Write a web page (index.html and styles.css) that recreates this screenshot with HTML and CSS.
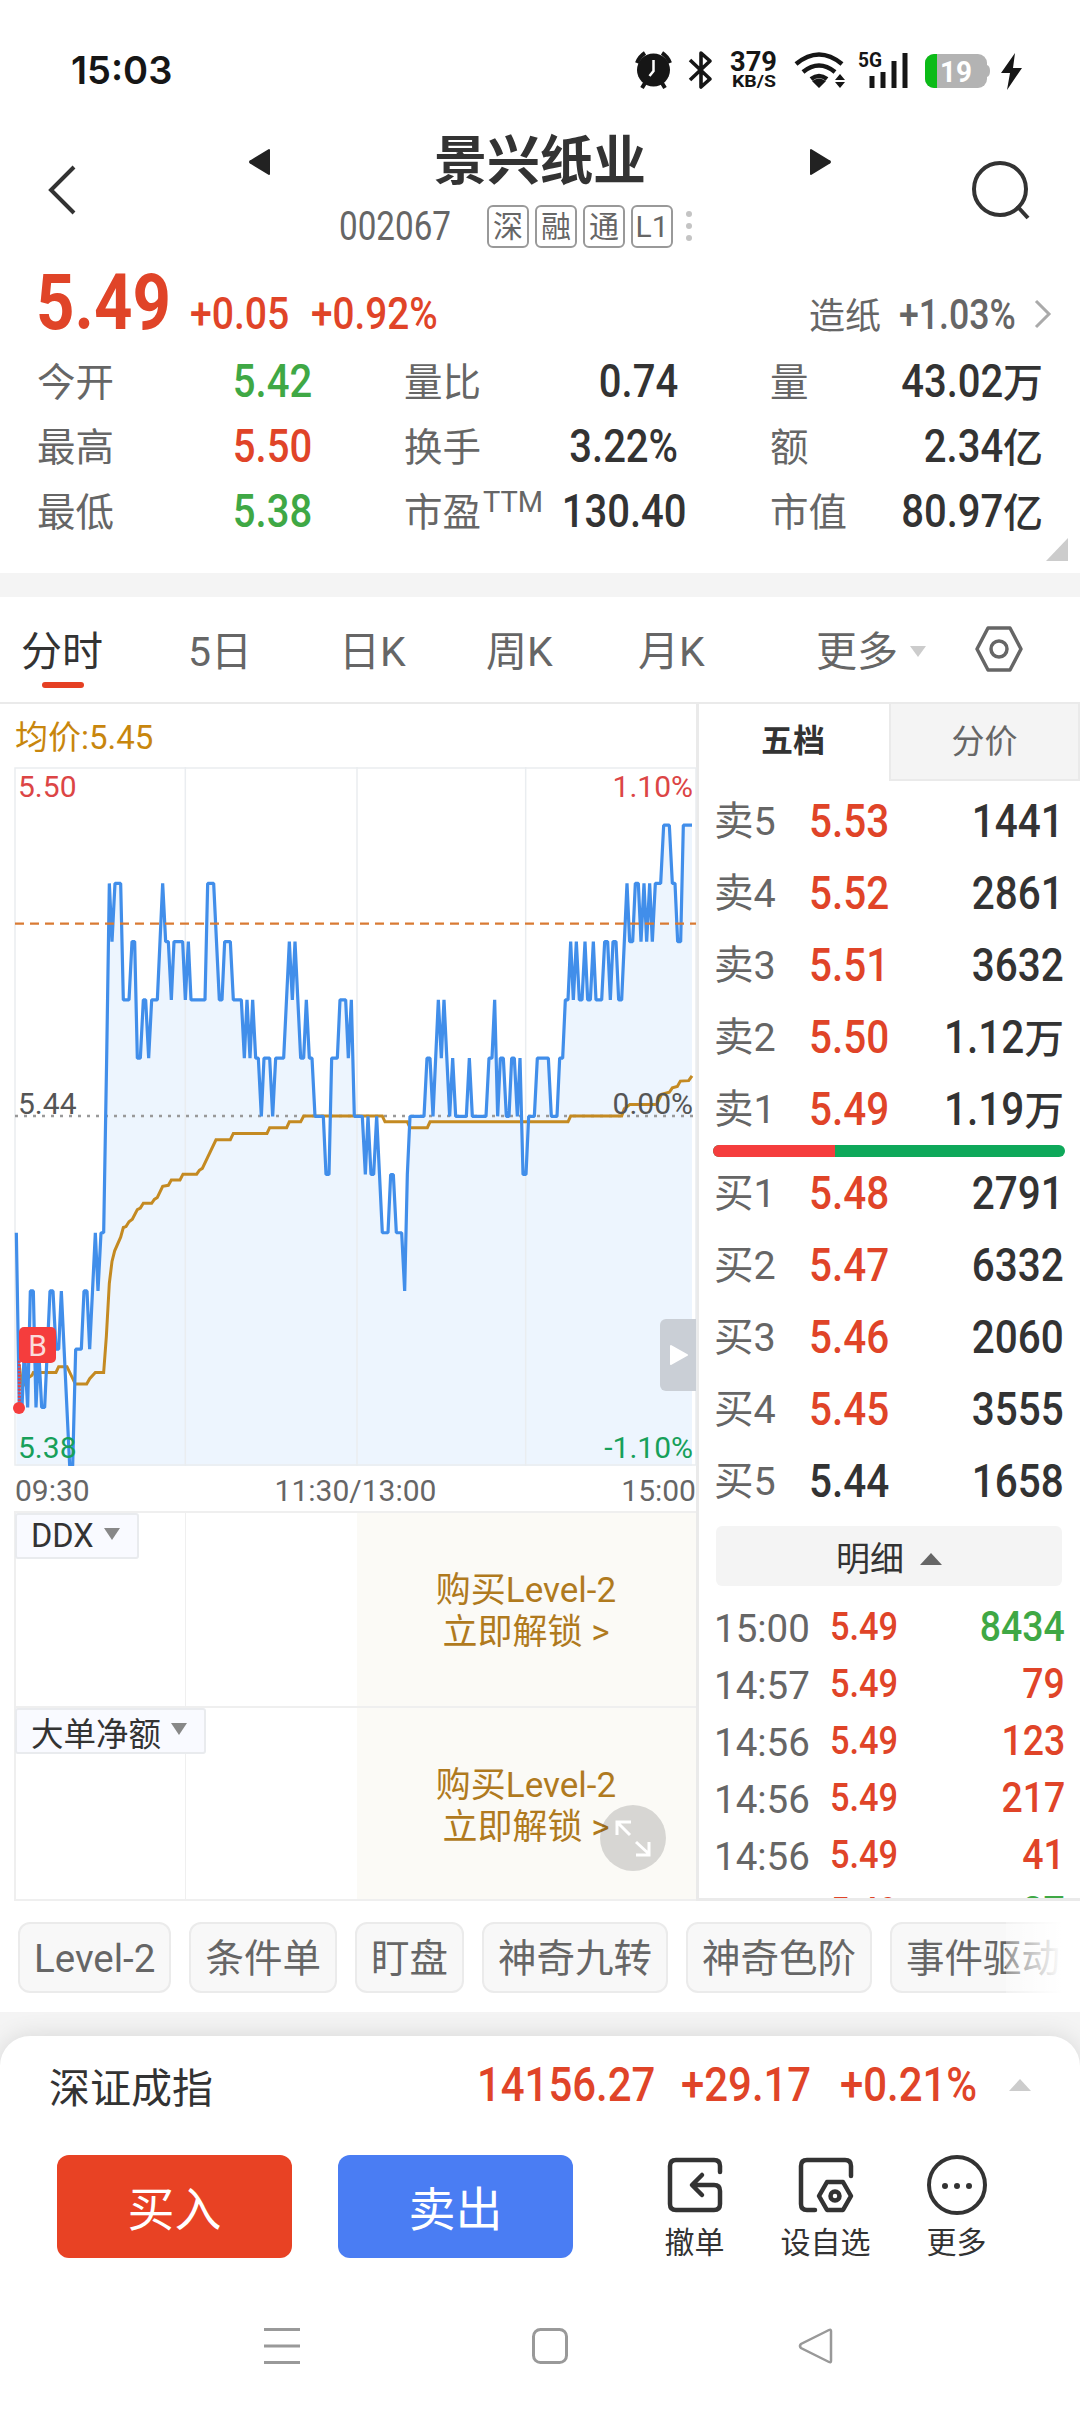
FILE: index.html
```html
<!DOCTYPE html>
<html lang="zh-CN">
<head>
  <meta charset="UTF-8">
  <meta name="viewport" content="width=device-width, initial-scale=1.0">
  <title>景兴纸业 002067</title>
  <link rel="stylesheet" href="styles.css">
</head>
<body>

<div class="status-bar">
  <span class="clock">15:03</span>
  <svg class="status-icons" width="400" height="60" viewBox="630 40 400 60">
    <g fill="#161616">
      <circle cx="653.500" cy="70" r="16.500"/>
      <path d="M637 63a20 20 0 0 1 8-10M670 63a20 20 0 0 0-8-10M645 83l-3 5M662 83l3 5" fill="none" stroke="#161616" stroke-width="4"/>
      <path d="M653.500 60v11l-4 5" fill="none" stroke="#fff" stroke-width="2.500"/>
      <path d="M690 60l20 19-9 8V53l9 8-20 19" fill="none" stroke="#161616" stroke-width="3.600" stroke-linejoin="round"/>
      <text class="net-speed" x="730" y="71" textLength="47" lengthAdjust="spacingAndGlyphs">379</text>
      <text class="net-unit" x="732" y="87" textLength="44" lengthAdjust="spacingAndGlyphs">KB/S</text>
      <path d="M796 64q23-19 46 0M803 72q16-13 32 0M811 79q8-6 16 0" fill="none" stroke="#161616" stroke-width="4.500"/>
      <path d="M812 81q7-5 14 0l-7 7zM835 80l5-6 5 6zM835 82l5 6 5-6z"/>
      <text class="net-5g" x="858" y="67" textLength="24" lengthAdjust="spacingAndGlyphs">5G</text>
      <path d="M872 76v12M883 72v16M894 61v27M905 53v35" stroke="#161616" stroke-width="5"/>
      <path d="M1015 53l-14 20h9l-3 17 15-22h-9z"/>
    </g>
    <rect x="925" y="54" width="62" height="34" rx="9" fill="#b3b3b3"/>
    <path d="M987 65q3 1 3 6t-3 6z" fill="#b3b3b3"/>
    <path d="M937 54h-3a9 9 0 0 0-9 9v16a9 9 0 0 0 9 9h3z" fill="#0bbb17"/>
    <text class="battery-text" x="940" y="82" textLength="32" lengthAdjust="spacingAndGlyphs">19</text>
  </svg>
</div>

<header class="header">
  <svg class="back" width="30" height="50" viewBox="0 0 30 50"><path d="M27 2L4 25l23 23" fill="none" stroke="#333" stroke-width="4"/></svg>
  <div class="stock">
    <div class="stock-name">
      <svg width="22" height="28" viewBox="0 0 22 28"><path d="M20 2v24L2 15q-2-1 0-2z" fill="#222" stroke="#222" stroke-width="2" stroke-linejoin="round"/></svg>
      <h1>景兴纸业</h1>
      <svg width="22" height="28" viewBox="0 0 22 28"><path d="M2 2v24l18-11q2-1 0-2z" fill="#222" stroke="#222" stroke-width="2" stroke-linejoin="round"/></svg>
    </div>
    <div class="stock-code">
      <span class="code"><span class="num">002067</span></span>
      <span class="tag">深</span>
      <span class="tag">融</span>
      <span class="tag">通</span>
      <span class="tag">L1</span>
      <svg width="6" height="32" viewBox="0 0 6 32" fill="#c4c4c4"><circle cx="3" cy="4" r="3"/><circle cx="3" cy="16" r="3"/><circle cx="3" cy="28" r="3"/></svg>
    </div>
  </div>
  <svg class="search" width="60" height="60" viewBox="0 0 60 60"><g fill="none" stroke="#333" stroke-width="4"><circle cx="29" cy="29" r="26"/><path d="M46 46l11 12"/></g></svg>
</header>

<section class="quote">
  <div class="price-row">
    <span class="price num red">5.49</span>
    <span class="change num red">+0.05</span>
    <span class="percent num red">+0.92%</span>
    <span class="sector">造纸</span>
    <span class="sector-value num">+1.03%</span>
    <svg width="20" height="32" viewBox="0 0 20 32"><path d="M3 3l13 13L3 29" fill="none" stroke="#aaa" stroke-width="3"/></svg>
  </div>
  <div class="stats">
    <div class="stat"><span>今开</span><span class="val green"><b class="num">5.42</b></span></div>
    <div class="stat"><span>量比</span><span class="val"><b class="num">0.74</b></span></div>
    <div class="stat"><span>量</span><span class="val"><b class="num">43.02</b>万</span></div>
    <div class="stat"><span>最高</span><span class="val red"><b class="num">5.50</b></span></div>
    <div class="stat"><span>换手</span><span class="val"><b class="num">3.22%</b></span></div>
    <div class="stat"><span>额</span><span class="val"><b class="num">2.34</b>亿</span></div>
    <div class="stat"><span>最低</span><span class="val green"><b class="num">5.38</b></span></div>
    <div class="stat"><span>市盈<sup>TTM</sup></span><span class="val"><b class="num">130.40</b></span></div>
    <div class="stat"><span>市值</span><span class="val"><b class="num">80.97</b>亿</span></div>
  </div>
  <svg class="corner" width="22" height="23" viewBox="0 0 22 23"><path d="M22 0v23H0z" fill="#ccc"/></svg>
</section>

<nav class="tabs">
  <span class="tab active">分时</span>
  <span class="tab">5日</span>
  <span class="tab">日K</span>
  <span class="tab">周K</span>
  <span class="tab">月K</span>
  <span class="tab more">更多 <svg width="16" height="11" viewBox="0 0 16 11"><path d="M0 0h16L8 11z" fill="#ccc"/></svg></span>
  <svg class="settings" width="48" height="48" viewBox="0 0 48 48"><g fill="none" stroke="#666" stroke-width="3.500" stroke-linejoin="round"><path d="M13 3h22l11 21-11 21H13L2 24z"/><circle cx="24" cy="24" r="8"/></g></svg>
</nav>

<main class="content">
  <div class="chart-col">
    <div class="avg-label">均价:5.45</div>
    <div class="chart">
      <svg id="chart" width="697" height="699" viewBox="0 15 2091 1442" preserveAspectRatio="none">
        <path class="area" id="area"/>
        <path class="grid" d="M556 15V1457M1071 15V1457M1577 15V1457M45 17H2088V1455H45z"/>
        <path class="zero" d="M45 735H2080"/>
        <path class="line-avg" id="avgLine"/>
        <path class="line-price" id="priceLine"/>
        <path class="cost" d="M45 338H2088"/>
        <path class="buy-stem" d="M58 1240V1330"/>
      </svg>
      <span class="axis top-left">5.50</span>
      <span class="axis top-right">1.10%</span>
      <span class="axis mid-left">5.44</span>
      <span class="axis mid-right">0.00%</span>
      <span class="axis bottom-left">5.38</span>
      <span class="axis bottom-right">-1.10%</span>
      <span class="buy-flag">B</span>
      <span class="buy-dot"></span>
      <span class="expand-tab"><svg width="20" height="22" viewBox="0 0 20 22"><path d="M2 2l16 9-16 9z" stroke="#fff" stroke-width="2" stroke-linejoin="round"/></svg></span>
    </div>
    <div class="times"><span>09:30</span><span>11:30/13:00</span><span>15:00</span></div>
    <div class="panel">
      <div class="cell"><span class="indicator">DDX <svg width="16" height="12" viewBox="0 0 16 12"><path d="M0 0h16L8 12z" fill="#888"/></svg></span></div>
      <div class="cell"></div>
      <div class="locked">购买Level-2<br>立即解锁 &gt;</div>
    </div>
    <div class="panel">
      <div class="cell"><span class="indicator">大单净额 <svg width="16" height="12" viewBox="0 0 16 12"><path d="M0 0h16L8 12z" fill="#888"/></svg></span></div>
      <div class="cell"></div>
      <div class="locked">购买Level-2<br>立即解锁 &gt;</div>
      <span class="fullscreen"><svg width="66" height="66" viewBox="0 0 66 66"><path d="M17 30V17H31M18 18l12 12M36 37l13 12M49 37V50H36" fill="none" stroke="#fff" stroke-width="3"/></svg></span>
    </div>
  </div>

  <div class="book-col">
    <div class="book-tabs"><span class="on">五档</span><span>分价</span></div>
    <div class="book">
      <div class="order"><span>卖5</span><b class="num red">5.53</b><span class="val"><b class="num">1441</b></span></div>
      <div class="order"><span>卖4</span><b class="num red">5.52</b><span class="val"><b class="num">2861</b></span></div>
      <div class="order"><span>卖3</span><b class="num red">5.51</b><span class="val"><b class="num">3632</b></span></div>
      <div class="order"><span>卖2</span><b class="num red">5.50</b><span class="val"><b class="num">1.12</b>万</span></div>
      <div class="order"><span>卖1</span><b class="num red">5.49</b><span class="val"><b class="num">1.19</b>万</span></div>
      <div class="ratio"><i></i></div>
      <div class="order"><span>买1</span><b class="num red">5.48</b><span class="val"><b class="num">2791</b></span></div>
      <div class="order"><span>买2</span><b class="num red">5.47</b><span class="val"><b class="num">6332</b></span></div>
      <div class="order"><span>买3</span><b class="num red">5.46</b><span class="val"><b class="num">2060</b></span></div>
      <div class="order"><span>买4</span><b class="num red">5.45</b><span class="val"><b class="num">3555</b></span></div>
      <div class="order"><span>买5</span><b class="num dark">5.44</b><span class="val"><b class="num">1658</b></span></div>
    </div>
    <div class="detail-btn">明细 <svg width="22" height="12" viewBox="0 0 22 12"><path d="M11 0l11 12H0z" fill="#666"/></svg></div>
    <div class="trades">
      <div class="trade"><span>15:00</span><b class="num red">5.49</b><span class="val green"><b class="num">8434</b></span></div>
      <div class="trade"><span>14:57</span><b class="num red">5.49</b><span class="val red"><b class="num">79</b></span></div>
      <div class="trade"><span>14:56</span><b class="num red">5.49</b><span class="val red"><b class="num">123</b></span></div>
      <div class="trade"><span>14:56</span><b class="num red">5.49</b><span class="val red"><b class="num">217</b></span></div>
      <div class="trade"><span>14:56</span><b class="num red">5.49</b><span class="val red"><b class="num">41</b></span></div>
      <div class="trade"><span></span><b class="num red">5.49</b><span class="val green"><b class="num">27</b></span></div>
    </div>
  </div>
</main>

<div class="chips">
  <span class="chip">Level-2</span>
  <span class="chip">条件单</span>
  <span class="chip">盯盘</span>
  <span class="chip">神奇九转</span>
  <span class="chip">神奇色阶</span>
  <span class="chip">事件驱动</span>
</div>

<footer class="sheet-wrap">
  <div class="sheet">
    <div class="index-row">
      <span class="index-name">深证成指</span>
      <span class="num red i1">14156.27</span>
      <span class="num red i2">+29.17</span>
      <span class="num red i3">+0.21%</span>
      <svg width="22" height="12" viewBox="0 0 22 12"><path d="M11 0l11 12H0z" fill="#ccc"/></svg>
    </div>
    <div class="actions">
      <button class="btn buy">买入</button>
      <button class="btn sell">卖出</button>
      <div class="action">
        <svg width="60" height="60" viewBox="0 0 60 60"><g fill="none" stroke="#333" stroke-width="4.500" stroke-linecap="round" stroke-linejoin="round"><path d="M55 17V11q0-6-6-6H11q-6 0-6 6v38q0 6 6 6h38q6 0 6-6V36q0-6-6-6H28M37 20L27 30l10 10"/></g></svg>
        <span>撤单</span>
      </div>
      <div class="action">
        <svg width="60" height="60" viewBox="0 0 60 60"><g fill="none" stroke="#333" stroke-width="4.500" stroke-linecap="round" stroke-linejoin="round"><path d="M55 21V11q0-6-6-6H11q-6 0-6 6v38q0 6 6 6h8M31 27h16l8 14-8 14H31L23 41z"/><circle cx="39" cy="41" r="4.500"/></g></svg>
        <span>设自选</span>
      </div>
      <div class="action">
        <svg width="60" height="60" viewBox="0 0 60 60"><circle cx="30" cy="30" r="28" fill="none" stroke="#333" stroke-width="4"/><g fill="#333"><circle cx="18" cy="31" r="3"/><circle cx="30" cy="31" r="3"/><circle cx="42" cy="31" r="3"/></g></svg>
        <span>更多</span>
      </div>
    </div>
    <div class="nav-bar">
      <svg width="36" height="36" viewBox="0 0 36 36"><path d="M0 1.500h36M0 18h36M0 34.500h36" stroke="#999" stroke-width="3"/></svg>
      <svg width="36" height="36" viewBox="0 0 36 36"><rect x="1.500" y="1.500" width="33" height="33" rx="7" fill="none" stroke="#999" stroke-width="3"/></svg>
      <svg width="36" height="36" viewBox="0 0 36 36"><path d="M33 3v30q0 2-2 1L3 20q-2-2 0-4L31 2q2-1 2 1z" fill="none" stroke="#999" stroke-width="2.500"/></svg>
    </div>
  </div>
</footer>

<script src="script.js"></script>
</body>
</html>
```
FILE: styles.css
```css
* {
  box-sizing: border-box;
}
body {
  margin: 0;
  width: 1080px;
  height: 2412px;
  overflow: hidden;
  background: #fff;
  color: #333;
  font-family: Roboto, "Noto Sans CJK SC", sans-serif;
}
svg {
  display: block;
  flex: none;
}
.red {
  color: #e04428;
}
.green {
  color: #3fa845;
}
.dark {
  color: #333;
}
/* narrow digits */
.num {
  display: inline-block;
  font-weight: 500;
  transform: scaleX(0.87);
  transform-origin: left center;
  white-space: nowrap;
}
.val {
  display: block;
  text-align: right;
  white-space: nowrap;
}
.val .num {
  transform-origin: right center;
}

/* status bar */
.status-bar {
  height: 128px;
  padding: 40px 50px 0 71px;
  display: flex;
  justify-content: space-between;
}
.clock {
  font: 600 38px/60px Inter, sans-serif;
  color: #161616;
}
.net-speed {
  font: 700 27px Roboto, sans-serif;
}
.net-unit {
  font: 700 16px Roboto, sans-serif;
}
.net-5g {
  font: 700 20px Roboto, sans-serif;
}
.battery-text {
  font: 700 30px Roboto, sans-serif;
  fill: #fff;
}

/* header */
.header {
  height: 137px;
  padding: 0 49px 0 47px;
  display: flex;
}
.back {
  margin-top: 37px;
}
.search {
  margin: 32px 0 0 auto;
}
.stock {
  width: 582px;
  margin-left: 172px;
}
.stock-name {
  display: flex;
  align-items: center;
  justify-content: space-between;
  height: 68px;
}
.stock-name h1 {
  margin: 0;
  font-size: 53px;
  line-height: 64px;
  font-weight: 700;
}
.stock-code {
  display: flex;
  align-items: center;
  gap: 6px;
  height: 60px;
  padding-left: 90px;
  color: #666;
}
.code {
  width: 142px;
  font-size: 40px;
}
.code .num {
  font-weight: 400;
  transform: scaleX(0.83);
}
.tag {
  width: 42px;
  height: 43px;
  border: 2px solid #999;
  border-radius: 6px;
  font-size: 30px;
  line-height: 40px;
  text-align: center;
}
.stock-code svg {
  margin-left: 7px;
}

/* quote */
.quote {
  position: relative;
  height: 332px;
  border-bottom: 24px solid #f4f4f4;
}
.price-row {
  display: flex;
  align-items: baseline;
  height: 84px;
  padding-left: 36px;
  font-size: 45px;
  line-height: 76px;
}
.price-row .price {
  width: 154px;
  font-size: 78px;
  font-weight: 700;
  transform: scaleX(0.86);
}
.price-row .change {
  width: 121px;
}
.price-row .percent {
  width: 498px;
  transform: scaleX(0.86);
}
.price-row .sector {
  width: 90px;
  font-size: 36px;
  color: #666;
}
.price-row .sector-value {
  width: 134px;
  font-size: 42px;
  color: #666;
  transform: scaleX(0.85);
}
.price-row svg {
  align-self: center;
  margin-top: 14px;
}
.stats {
  display: grid;
  grid-template-columns: 275px 274px 273px;
  column-gap: 92px;
  padding-left: 37px;
}
.stat {
  display: flex;
  justify-content: space-between;
  height: 65px;
  line-height: 67px;
  font-size: 38.5px;
  color: #666;
  white-space: nowrap;
}
.stat .val {
  color: #333;
  font-weight: 500;
  font-size: 40px;
  line-height: 65px;
}
.stat .val.red {
  color: #e04428;
}
.stat .val.green {
  color: #3fa845;
}
.stat .num {
  font-size: 46px;
}
.stat sup {
  margin-left: 2px;
  font-size: 29px;
  line-height: 0;
  vertical-align: 14px;
}
.corner {
  position: absolute;
  right: 12px;
  bottom: 12px;
}

/* period tabs */
.tabs {
  display: flex;
  align-items: center;
  height: 107px;
  padding: 4px 0 0 21px;
  border-bottom: 2px solid #eaeaea;
  font-size: 41px;
  color: #666;
}
.tab {
  position: relative;
  width: 151px;
  line-height: 60px;
}
.tab:nth-child(1) {
  width: 167px;
}
.tab:nth-child(4) {
  width: 152px;
}
.tab:nth-child(3) {
  width: 147px;
}
.tab:nth-child(5) {
  width: 178px;
}
.tab.active {
  color: #333;
}
.tab.active::after {
  content: "";
  position: absolute;
  left: 21px;
  bottom: -6px;
  width: 42px;
  height: 6px;
  border-radius: 3px;
  background: #e54023;
}
.tab.more {
  display: flex;
  align-items: center;
  gap: 12px;
  width: 159px;
}
.settings {
  margin-top: -5px;
}

/* chart */
.content {
  display: flex;
  height: 1197px;
}
.chart-col {
  width: 699px;
  border-right: 3px solid #eaeaea;
}
.avg-label {
  height: 63px;
  padding-left: 15px;
  font-size: 33px;
  line-height: 67px;
  color: #c8860d;
}
.chart {
  position: relative;
  height: 699px;
}
#chart path {
  fill: none;
  vector-effect: non-scaling-stroke;
}
#chart .area {
  fill: #edf5fe;
}
.chart .grid {
  stroke: #eaedf0;
  stroke-width: 1.5;
}
.chart .zero {
  stroke: #999;
  stroke-width: 2.5;
  stroke-dasharray: 3 6;
}
.chart .line-avg {
  stroke: #c48a22;
  stroke-width: 3;
}
.chart .line-price {
  stroke: #418eea;
  stroke-width: 3.2;
  stroke-linejoin: bevel;
}
.chart .cost {
  stroke: #d97b34;
  stroke-width: 2.3;
  stroke-dasharray: 9 6;
}
.chart .buy-stem {
  stroke: #f53d3d;
  stroke-width: 3;
  stroke-dasharray: 2 1.5;
}
.axis {
  position: absolute;
  font-size: 30px;
  line-height: 34px;
  color: #555;
}
.top-left, .mid-left, .bottom-left {
  left: 18px;
}
.top-right, .mid-right, .bottom-right {
  right: 3px;
}
.top-left, .top-right {
  top: 3px;
  color: #dc4545;
}
.mid-left, .mid-right {
  top: 320px;
}
.bottom-left, .bottom-right {
  bottom: 1px;
  color: #17a05a;
}
.buy-flag {
  position: absolute;
  left: 19px;
  top: 560px;
  width: 37px;
  height: 36px;
  border-radius: 5px;
  background: #f53d3d;
  color: #fbdcdc;
  font-size: 30px;
  line-height: 38px;
  text-align: center;
}
.buy-dot {
  position: absolute;
  left: 13px;
  top: 635px;
  width: 12px;
  height: 12px;
  border-radius: 50%;
  background: #f53d3d;
}
.expand-tab {
  position: absolute;
  right: 0;
  top: 552px;
  width: 36px;
  height: 72px;
  padding: 25px 0 0 9px;
  border-radius: 6px 0 0 6px;
  background: #cacfd6;
  fill: #fff;
}
.times {
  display: flex;
  justify-content: space-between;
  height: 45px;
  padding-left: 15px;
  font-size: 30px;
  line-height: 50px;
  color: #666;
}
.panel {
  position: relative;
  display: grid;
  grid-template-columns: 170px 171px 1fr;
  height: 195px;
  margin-left: 14px;
  border-top: 2px solid #efefef;
  border-left: 2px solid #efefef;
}
.panel:last-child {
  border-bottom: 2px solid #efefef;
}
.cell {
  border-right: 1px solid #efefef;
}
.cell + .cell {
  border: 0;
}
.indicator {
  display: inline-flex;
  align-items: center;
  gap: 10px;
  height: 46px;
  padding: 0 17px 0 14px;
  margin-left: -1px;
  border: 2px solid #e9ebee;
  border-radius: 3px;
  background: #f9faff;
  font-size: 32.5px;
  white-space: nowrap;
}
.indicator svg {
  margin-top: -4px;
}
.locked {
  padding: 57px 1px 0 0;
  background: #fbfaf6;
  color: #b07a1e;
  font-size: 35px;
  line-height: 42px;
  text-align: center;
}
.fullscreen {
  position: absolute;
  right: 30px;
  top: 97px;
  width: 66px;
  height: 66px;
  border-radius: 50%;
  background: rgba(0, 0, 0, 0.14);
}

/* order book */
.book-col {
  width: 381px;
  border-bottom: 3px solid #eaeaea;
  overflow: hidden;
}
.book-tabs {
  display: grid;
  grid-template-columns: 190px 191px;
  height: 72px;
  font-size: 32px;
  line-height: 75px;
  text-align: center;
  color: #666;
}
.book-tabs span + span {
  border: 2px solid #eaeaea;
  border-top: 0;
  background: #f4f4f4;
  font-size: 33px;
}
.book-tabs .on {
  padding-right: 2px;
  font-weight: 700;
  color: #333;
}
.book {
  height: 740px;
  padding: 9px 16px 0 15px;
}
.order {
  display: grid;
  grid-template-columns: 95px 100px 1fr;
  height: 72px;
  line-height: 73px;
  font-size: 39.5px;
  color: #666;
}
.order .num {
  font-size: 46.5px;
}
.order .val {
  color: #333;
  font-weight: 500;
}
.ratio {
  height: 12px;
  margin: 0 -1px 0 -1px;
  border-radius: 6px;
  background: #0ea85a;
  overflow: hidden;
}
.ratio i {
  display: block;
  width: 122px;
  height: 12px;
  background: #f53d3d;
}
.detail-btn {
  display: flex;
  align-items: center;
  justify-content: center;
  gap: 16px;
  width: 346px;
  height: 60px;
  margin: 10px 0 13px 17px;
  border-radius: 6px;
  background: #f4f4f4;
  font-size: 34px;
}
.detail-btn svg {
  margin-top: 6px;
}
.trades {
  padding: 0 15px 0 15px;
}
.trade {
  display: grid;
  grid-template-columns: 116px 100px 1fr;
  height: 57px;
  line-height: 55px;
  font-size: 38.5px;
  color: #666;
}
.trade > span:first-child {
  line-height: 60px;
}
.trade > .num {
  font-size: 39.5px;
  line-height: 55px;
}
.trade .val.red {
  color: #e04428;
}
.trade .val.green {
  color: #3fa845;
}
.trade .val .num {
  font-size: 43px;
}

/* chips */
.chips {
  position: relative;
  display: flex;
  gap: 18px;
  width: 1062px;
  height: 111px;
  padding: 21px 0 0 18px;
  overflow: hidden;
}
.chip {
  flex: none;
  height: 71px;
  padding: 0 14px;
  border: 2px solid #ebebeb;
  border-radius: 12px;
  background: #f8f8f8;
  font-size: 38.5px;
  line-height: 70px;
  color: #666;
}
.chips::after {
  content: "";
  position: absolute;
  right: 0;
  top: 18px;
  width: 56px;
  height: 80px;
  background: linear-gradient(to right, rgba(255, 255, 255, 0.3), #fff);
}

/* bottom sheet */
.sheet-wrap {
  height: 400px;
  padding-top: 24px;
  background: #f4f4f4;
}
.sheet {
  height: 376px;
  border-radius: 30px 30px 0 0;
  background: #fff;
  box-shadow: 0 0 24px rgba(0, 0, 0, 0.12);
  clip-path: inset(-24px 0 0 0);
}
.index-row {
  display: flex;
  align-items: center;
  height: 97px;
  padding-left: 49px;
  font-size: 49px;
}
.index-name {
  width: 428px;
  font-size: 41px;
}
.index-row .num {
  transform: scaleX(0.855);
}
.index-row .i1 {
  width: 204px;
}
.index-row .i2 {
  width: 159px;
}
.index-row .i3 {
  width: 169px;
}
.actions {
  display: flex;
  height: 131px;
  padding: 22px 0 0 57px;
}
.btn {
  width: 235px;
  height: 103px;
  margin-right: 46px;
  padding: 0 0 3px;
  border: 0;
  border-radius: 12px;
  color: #fff;
  font-family: inherit;
  font-size: 47px;
}
.buy {
  background: #e84224;
}
.sell {
  background: #4a7df3;
}
.action {
  display: flex;
  flex-direction: column;
  align-items: center;
  width: 131px;
  font-size: 30px;
  line-height: 56px;
}
.btn.sell {
  margin-right: 56px;
}
.nav-bar {
  display: grid;
  grid-template-columns: 268px 266px 36px;
  padding: 64px 0 0 264px;
}
```
FILE: script.js
```js
// price points: x, cents above 5.00
const prices = `49,42 58,39 66,39 73,40 83,39 91,41 100,41 108,39 116,40 125,39 134,39 150,41 159,41 168,40 176,40 184,41
209,38 218,38 227,40 244,40 252,41 261,41 269,40 286,42 294,41 303,42 311,42 320,45 328,48 336,47 345,48 362,48 370,46
387,46 396,47 404,47 412,45 421,45 430,46 437,46 446,45 455,46 472,46 480,47 488,48 497,47 505,47 514,46 522,47 548,47
556,46 565,47 573,46 615,46 623,48 641,48 658,46 666,46 674,47 691,47 700,46 724,46 733,45 741,46 750,45 758,46 767,45
775,45 784,44 792,45 809,45 818,44 827,45 851,45 868,47 877,46 885,47 902,45 911,45 919,46 928,45 936,45 945,44 970,44
978,43 987,43 995,45 1012,45 1020,46 1037,46 1045,45 1054,46 1063,44 1087,44 1096,43 1104,44 1113,43 1121,43 1130,44
1147,42 1164,42 1172,43 1180,43 1189,42 1205,42 1214,41 1222,43 1230,44 1272,44 1281,45 1290,45 1299,44 1315,46 1324,45
1332,46 1349,44 1358,45 1367,44 1399,44 1408,45 1417,44 1458,44 1467,45 1476,45 1484,46 1493,44 1501,45 1510,45 1519,44
1527,44 1535,45 1543,45 1552,44 1560,45 1569,43 1578,43 1586,44 1603,44 1612,45 1645,45 1654,44 1671,44 1679,45 1688,45
1696,46 1704,46 1712,47 1720,46 1729,47 1738,46 1746,46 1755,47 1763,46 1771,46 1780,47 1788,46 1805,46 1814,47 1823,47
1831,46 1839,47 1848,47 1856,46 1865,46 1881,48 1889,47 1898,47 1906,48 1915,48 1923,47 1932,48 1940,47 1949,48 1957,47
1966,48 1982,48 1991,49 2008,49 2017,48 2025,48 2033,47 2042,47 2050,49 2076,49`;

// average price, already in chart units
const average = `58,1250 66,1295 83,1276 96,1270 100,1264 168,1264 176,1252 201,1252 226,1288 260,1288 269,1277 286,1264
311,1264 319,1190 328,1080 336,1035 344,1013 362,985 370,965 378,963 387,953 397,948 412,928 421,925 430,915 455,915
463,907 472,903 488,880 505,878 514,867 540,867 549,855 590,855 598,847 607,843 648,784 691,784 700,771 801,771 809,759
860,759 868,747 902,747 911,735 1147,735 1155,747 1222,747 1230,759 1282,759 1290,747 1704,747 1712,735 1865,735
1873,720 1890,711 1970,711 1985,690 2008,686 2017,677 2032,674 2041,663 2066,662 2076,652`;

const points = prices.split(/\s+/).map(function (p) {
  const [x, cents] = p.split(",").map(Number);
  return x + " " + (15 + (50 - cents) * 120.1).toFixed(1);
});
const line = "M" + points.join("L");

document.getElementById("priceLine").setAttribute("d", line);
document.getElementById("area").setAttribute("d", line + "V1457H49z");
document.getElementById("avgLine").setAttribute("d", "M" + average.split(/\s+/).join("L"));
```
